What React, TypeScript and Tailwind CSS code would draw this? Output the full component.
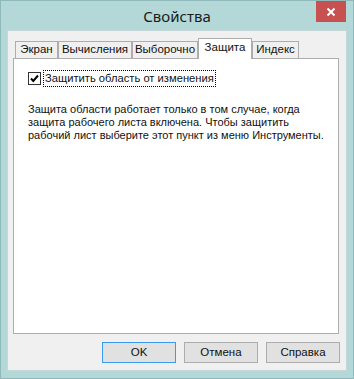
import React from "react";

const tabs = [
  { label: "Экран", w: "w-[43px]" },
  { label: "Вычисления", w: "w-[74px]" },
  { label: "Выборочно", w: "w-[66px]" },
  { label: "Защита", w: "w-[54px]", active: true },
  { label: "Индекс", w: "w-[47px]" },
];

export default function App() {
  return (
    <div
      className="relative w-[354px] h-[379px] bg-[#b4d7d7] border border-[#8fb9ba] flex flex-col"
      style={{ fontFamily: '"Liberation Sans", Arial, sans-serif' }}
    >
      {/* Title bar */}
      <div className="relative h-[29px] flex items-center justify-center">
        <span
          className="text-[15px] text-[#1b1b1b] mt-[2px]"
          style={{ fontFamily: '"Noto Sans", "Open Sans", sans-serif' }}
        >
          Свойства
        </span>
        <div className="absolute right-[7px] top-0 w-[30px] h-[21px] bg-[#c75050] flex items-center justify-center">
          <svg width="10" height="10" viewBox="0 0 10 10">
            <path d="M1.5 1.5 L8.5 8.5 M8.5 1.5 L1.5 8.5" stroke="#ffffff" strokeWidth="2" />
          </svg>
        </div>
      </div>

      {/* Client area */}
      <div className="ml-[6px] w-[340px] h-[341px] bg-[#f0f0f0] border border-[#c5d8d8] flex flex-col pl-[5px] pr-[5px] pt-[7px]">
        {/* Tabs */}
        <div className="flex items-end h-[20px] pl-[2px]">
          {tabs.map((t) =>
            t.active ? (
              <div
                key={t.label}
                className={`${t.w} h-[21px] -mb-[1px] relative z-10 bg-white border border-b-0 border-[#adadad] flex items-center justify-center text-[11.5px] text-[#111] pb-[3px]`}
              >
                {t.label}
              </div>
            ) : (
              <div
                key={t.label}
                className={`${t.w} h-[17px] bg-[#f0f0f0] border border-b-0 border-[#adadad] flex items-center justify-center text-[11.5px] text-[#111]`}
              >
                {t.label}
              </div>
            )
          )}
        </div>

        {/* Panel */}
        <div className="w-[326px] h-[276px] bg-white border border-[#adadad] pl-[14px] pt-[11px]">
          <div className="flex items-center h-[17px]">
            <div className="w-[13px] h-[13px] border border-[#333333] bg-white flex items-center justify-center">
              <svg width="11" height="11" viewBox="0 0 11 11">
                <path d="M2 5.5 L4.3 8 L9 2.5" fill="none" stroke="#000000" strokeWidth="2" />
              </svg>
            </div>
            <div className="ml-[2px] h-[17px] border border-dotted border-black px-[1px] flex items-center text-[11.2px] text-[#111]">
              Защитить область от изменения
            </div>
          </div>
          <p className="mt-[16px] text-[11px] leading-[13px] text-[#111]">
            Защита области работает только в том случае, когда
            <br />
            защита рабочего листа включена. Чтобы защитить
            <br />
            рабочий лист выберите этот пункт из меню Инструменты.
          </p>
        </div>

        {/* Buttons */}
        <div className="flex justify-end gap-[8px] mt-[8px] pr-[1px]">
          <button className="w-[74px] h-[21px] bg-[#e1e1e1] border border-[#3c9bf0] text-[11.5px] text-[#111] flex items-center justify-center">
            OK
          </button>
          <button className="w-[74px] h-[21px] bg-[#e1e1e1] border border-[#adadad] text-[11.5px] text-[#111] flex items-center justify-center">
            Отмена
          </button>
          <button className="w-[74px] h-[21px] bg-[#e1e1e1] border border-[#adadad] text-[11.5px] text-[#111] flex items-center justify-center">
            Справка
          </button>
        </div>
      </div>
    </div>
  );
}
